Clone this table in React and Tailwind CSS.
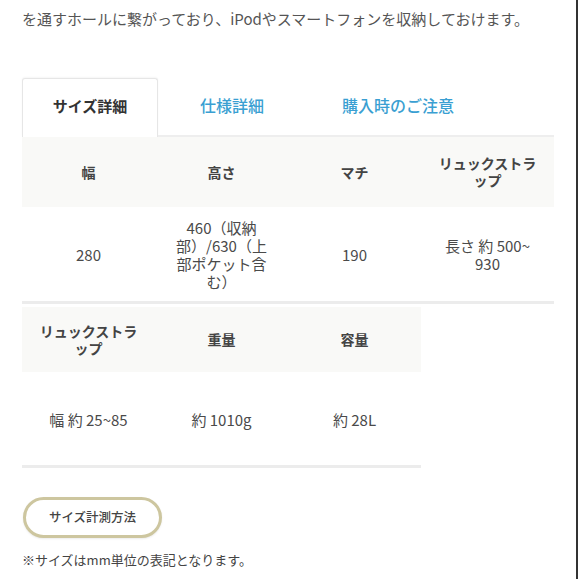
import React from 'react'

const font = { fontFamily: '"Noto Sans CJK JP", "Noto Sans", sans-serif' }

function HeadCell({ children }) {
  return (
    <div className="flex items-center justify-center text-center text-[14px] leading-[17px] font-bold text-[#444]">
      <span>{children}</span>
    </div>
  )
}

function BodyCell({ children }) {
  return (
    <div className="flex items-center justify-center text-center text-[15px] leading-[18px] text-[#4a4a4a]">
      <span>{children}</span>
    </div>
  )
}

export default function App() {
  return (
    <div className="w-[579px] h-[579px] bg-white flex overflow-hidden" style={font}>
      <div className="flex-1 pl-[22px] pr-[22px]">
        <p className="pt-[7px] text-[15px] leading-6 text-[#555] whitespace-nowrap">
          を通すホールに繋がっており、iPodやスマートフォンを収納しておけます。
        </p>

        {/* tabs */}
        <div className="mt-[47px] flex h-[59px]">
          <div className="w-[136px] border border-b-0 border-[#e6e6e6] rounded-t-[3px] bg-white flex items-center justify-center pb-[4px] text-[15px] font-bold text-[#333] shadow-[0_-1px_2px_rgba(0,0,0,0.04)]">
            サイズ詳細
          </div>
          <div className="flex-1 flex items-center pb-[4px] border-b-2 border-[#eeeeee] text-[16px] font-medium text-[#3a9fd2]">
            <span className="ml-[42px]">仕様詳細</span>
            <span className="ml-[78px]">購入時のご注意</span>
          </div>
        </div>

        {/* table 1 */}
        <div className="w-[532px]">
          <div className="grid grid-cols-4 h-[70px] bg-[#f9f9f7]">
            <HeadCell>幅</HeadCell>
            <HeadCell>高さ</HeadCell>
            <HeadCell>マチ</HeadCell>
            <HeadCell>リュックストラ<br />ップ</HeadCell>
          </div>
          <div className="grid grid-cols-4 h-[94px] pt-[2px]">
            <BodyCell>280</BodyCell>
            <BodyCell>460（収納<br />部）/630（上<br />部ポケット含<br />む）</BodyCell>
            <BodyCell>190</BodyCell>
            <BodyCell>長さ 約 500~<br />930</BodyCell>
          </div>
          <div className="h-[3px] bg-[#ececec]" />
        </div>

        {/* table 2 */}
        <div className="mt-[3px] w-[399px]">
          <div className="grid grid-cols-3 h-[65px] bg-[#f9f9f7]">
            <HeadCell>リュックストラ<br />ップ</HeadCell>
            <HeadCell>重量</HeadCell>
            <HeadCell>容量</HeadCell>
          </div>
          <div className="grid grid-cols-3 h-[93px] pt-[3px]">
            <BodyCell>幅 約 25~85</BodyCell>
            <BodyCell>約 1010g</BodyCell>
            <BodyCell>約 28L</BodyCell>
          </div>
          <div className="h-[3px] bg-[#ececec]" />
        </div>

        <button className="mt-[29px] ml-px w-[139px] h-[41px] rounded-full border-[3px] border-[#cdc69f] bg-white text-[12.5px] font-medium text-[#444] shadow-[0_1px_2px_rgba(0,0,0,0.08)]">
          サイズ計測方法
        </button>

        <p className="mt-[12px] text-[13px] leading-5 text-[#444]">
          ※サイズはmm単位の表記となります。
        </p>
      </div>
      <div className="w-[2px] bg-[#333]" />
      <div className="w-px bg-white" />
    </div>
  )
}
